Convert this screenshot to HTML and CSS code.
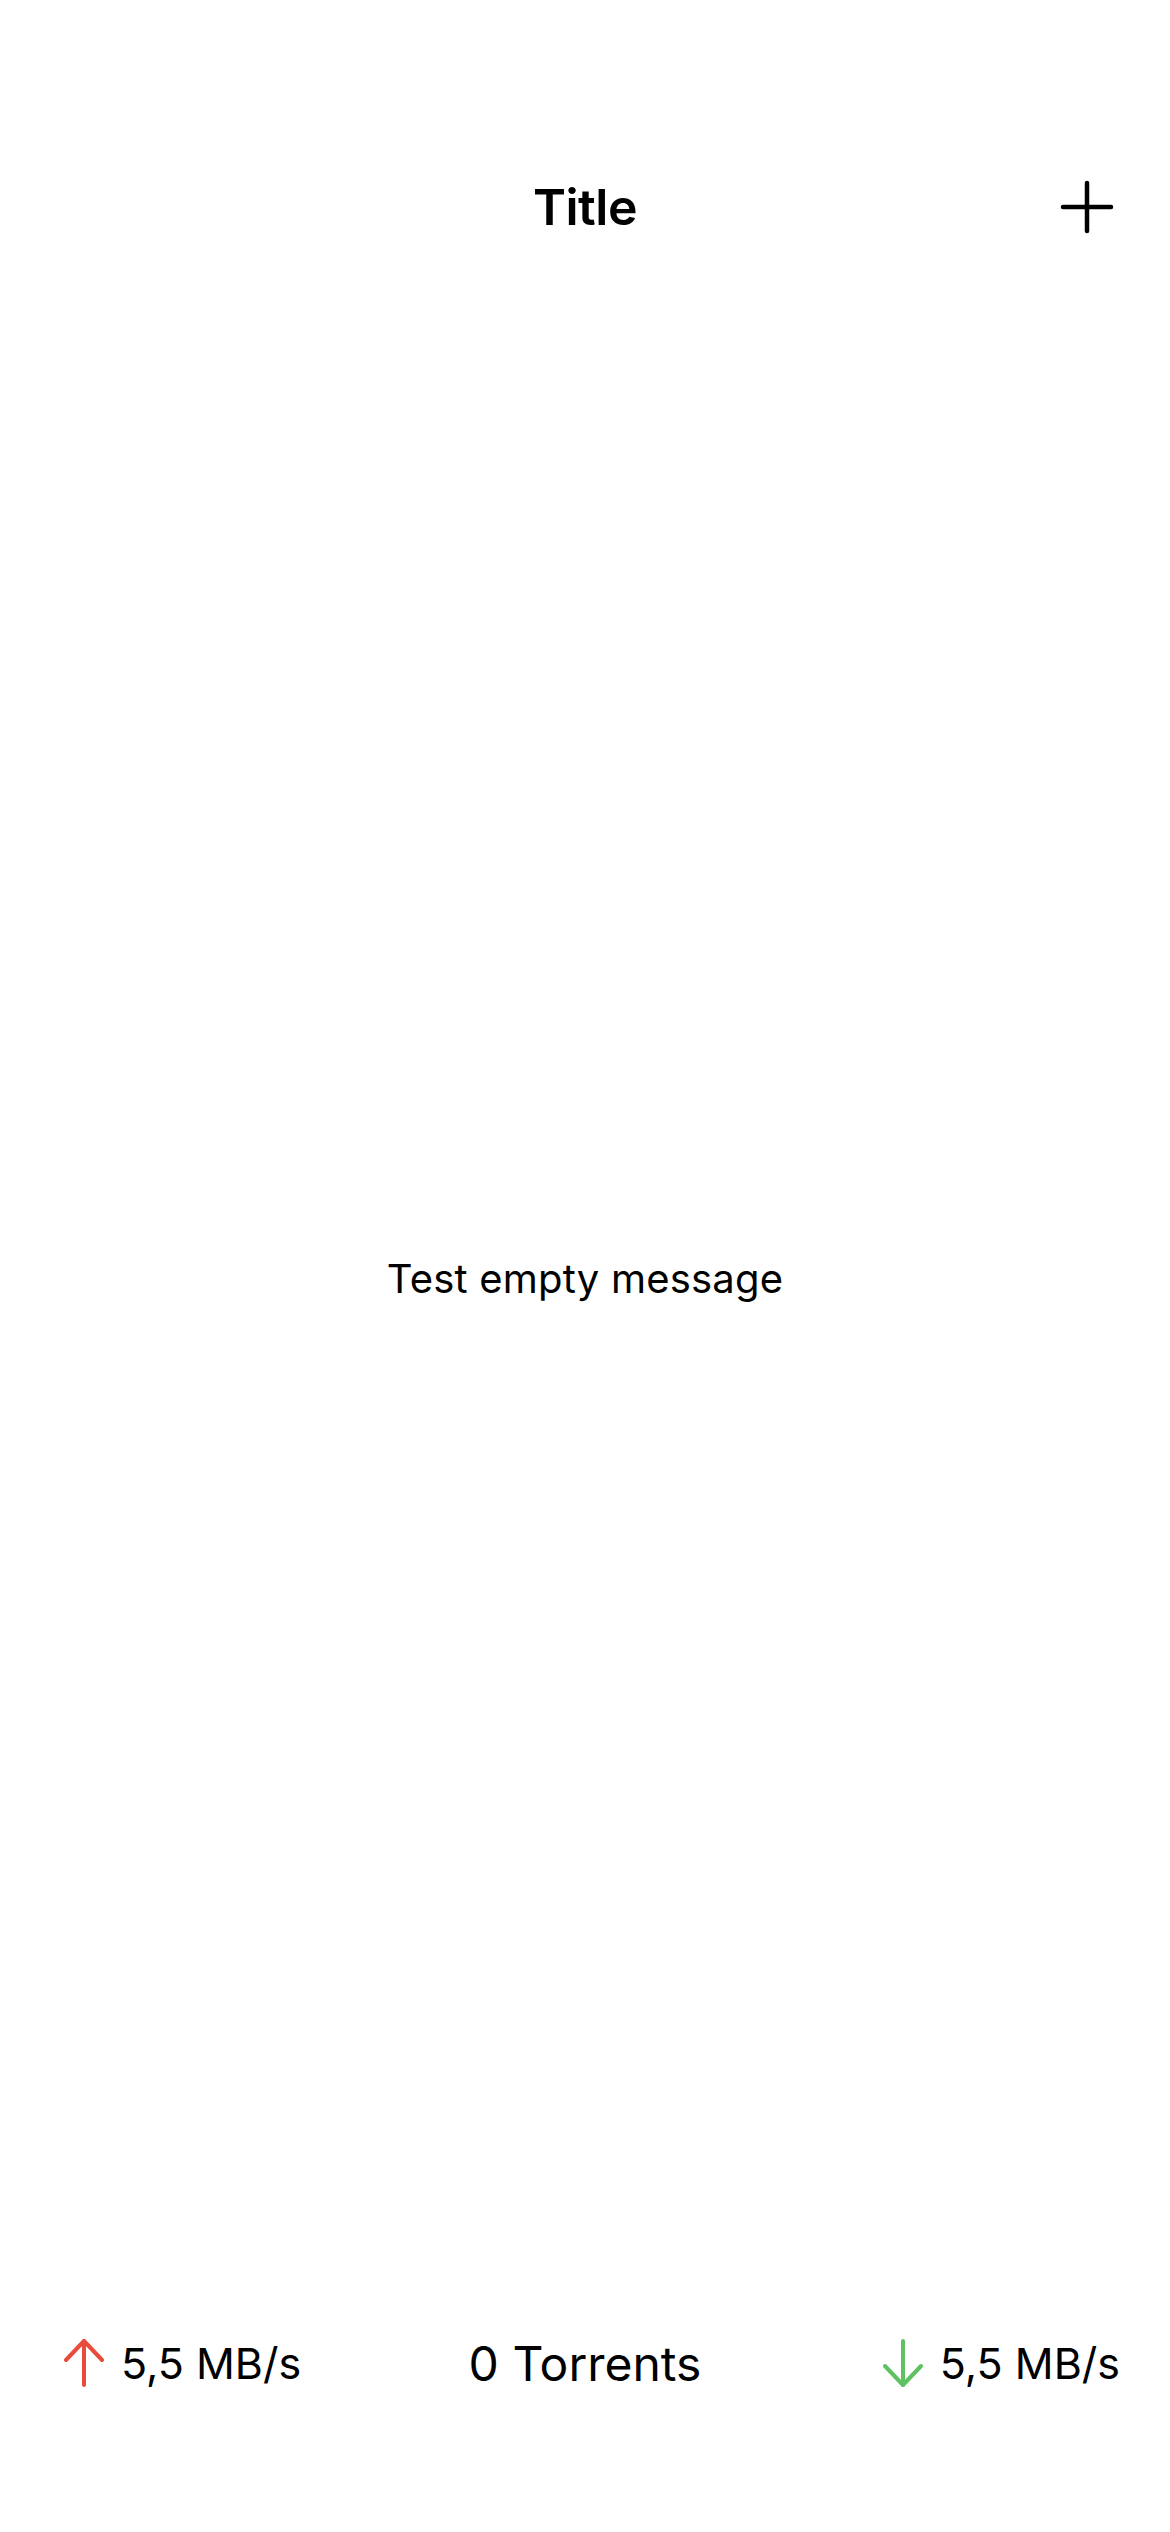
FILE: index.html
```html
<!DOCTYPE html>
<html lang="en">
<head>
<meta charset="utf-8">
<title>Torrents</title>
<link rel="stylesheet" href="styles.css">
</head>
<body>
<div class="screen">
  <header class="navbar">
    <div class="nav-side"></div>
    <h1 class="nav-title">Title</h1>
    <div class="nav-side nav-right">
      <button class="icon-btn" aria-label="Add">
        <svg width="54" height="54" viewBox="0 0 54 54" fill="none" stroke="#000" stroke-width="4.5" stroke-linecap="round">
          <path d="M27 3V51"/>
          <path d="M3 27H51"/>
        </svg>
      </button>
    </div>
  </header>
  <main class="content">
    <p class="empty">Test empty message</p>
  </main>
  <footer class="statusbar">
    <div class="speed speed-up">
      <svg class="arrow" width="40" height="50" viewBox="0 0 40 50" fill="none" stroke="#E94B3C" stroke-width="4" stroke-linecap="round" stroke-linejoin="round">
        <path d="M20 3V47"/>
        <path d="M2 22L20 3L38 22"/>
      </svg>
      <span>5,5 MB/s</span>
    </div>
    <div class="count">0 Torrents</div>
    <div class="speed speed-down">
      <svg class="arrow" width="40" height="50" viewBox="0 0 40 50" fill="none" stroke="#5EC262" stroke-width="4" stroke-linecap="round" stroke-linejoin="round">
        <path d="M20 3V47"/>
        <path d="M2 28L20 47L38 28"/>
      </svg>
      <span>5,5 MB/s</span>
    </div>
  </footer>
</div>
</body>
</html>
```
FILE: styles.css
```css
html, body {
  margin: 0;
  padding: 0;
  background: #ffffff;
}

body {
  font-family: Inter, "Noto Sans", "Liberation Sans", sans-serif;
  color: #000;
}

.screen {
  width: 1170px;
  height: 2532px;
  display: flex;
  flex-direction: column;
  background: #ffffff;
}

.navbar {
  box-sizing: border-box;
  height: 273px;
  padding: 141px 56px 0 56px;
  display: grid;
  grid-template-columns: 1fr auto 1fr;
  align-items: center;
}

.nav-title {
  margin: 0;
  font-size: 50px;
  font-weight: 600;
  letter-spacing: -0.5px;
  line-height: 132px;
}

.nav-right {
  display: flex;
  justify-content: flex-end;
}

.icon-btn {
  border: 0;
  background: none;
  padding: 0;
  display: flex;
  cursor: pointer;
}

.content {
  flex: 1;
  display: flex;
  align-items: center;
  justify-content: center;
}

.empty {
  margin: 0;
  font-size: 40px;
  font-weight: 400;
  letter-spacing: 0.2px;
}

.statusbar {
  box-sizing: border-box;
  height: 249px;
  padding: 0 50px 89px 50px;
  display: grid;
  grid-template-columns: 1fr auto 1fr;
  align-items: center;
  background: #ffffff;
}

.speed {
  display: flex;
  align-items: center;
  gap: 17px;
  font-size: 43px;
  font-weight: 400;
}

.speed-up {
  padding-left: 14px;
}

.speed-down {
  justify-content: flex-end;
}

.arrow {
  display: block;
}

.count {
  font-size: 48px;
  font-weight: 400;
}
```
